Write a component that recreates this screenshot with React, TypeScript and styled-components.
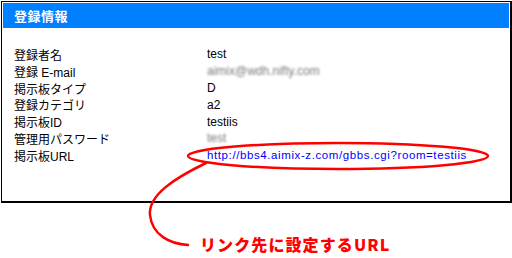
import React from "react";
import styled, { createGlobalStyle } from "styled-components";

const GlobalStyle = createGlobalStyle`
  html, body {
    margin: 0;
    padding: 0;
    background: #ffffff;
  }
  body {
    font-family: "Liberation Sans", "Noto Sans CJK JP", sans-serif;
  }
`;

const Page = styled.div`
  position: relative;
  width: 512px;
  height: 258px;
  padding: 1px 0 0 1px;
  box-sizing: border-box;
  overflow: hidden;
`;

const Panel = styled.section`
  width: 511px;
  height: 202px;
  box-sizing: border-box;
  border-style: solid;
  border-color: #000000;
  border-width: 1px 2px 2px 1px;
  padding: 1px;
  background: #ffffff;
`;

const PanelHeader = styled.h2`
  margin: 0;
  height: 25px;
  padding-left: 11px;
  display: flex;
  align-items: center;
  background: #0080ff;
  color: #ffffff;
  font-family: "Noto Sans CJK JP", sans-serif;
  font-size: 13px;
  font-weight: 700;
  letter-spacing: 0.5px;
`;

const InfoList = styled.dl`
  margin: 0;
  padding: 18px 0 0 11px;
  display: grid;
  grid-template-columns: 193px 1fr;
  grid-auto-rows: 16.8px;
  align-items: center;
  font-size: 12px;
  color: #000000;
`;

const Label = styled.dt`
  margin: 0;
  font-family: "Liberation Sans", "Noto Sans CJK JP", sans-serif;
  white-space: nowrap;
`;

const Value = styled.dd<{ $hidden?: boolean }>`
  margin: 0;
  white-space: nowrap;
  font-family: "Liberation Sans", "Noto Sans CJK JP", sans-serif;
  color: ${(p) => (p.$hidden ? "#7a7a7a" : "#000000")};
  filter: ${(p) => (p.$hidden ? "blur(1.3px)" : "none")};
`;

const Link = styled.a`
  color: #0000ff;
  text-decoration: none;
  font-size: 11.5px;
  letter-spacing: 0.6px;
`;

const Caption = styled.p`
  margin: 32px 0 0 199px;
  line-height: 19px;
  color: #ff0000;
  font-family: "Noto Sans CJK JP", sans-serif;
  font-size: 16px;
  font-weight: 900;
  letter-spacing: 1.1px;
`;

const Annotation = styled.svg`
  position: absolute;
  left: 0;
  top: 0;
  pointer-events: none;
`;

const rows: { label: string; value: string; hidden?: boolean; link?: boolean }[] = [
  { label: "登録者名", value: "test" },
  { label: "登録 E-mail", value: "aimix@wdh.nifty.com", hidden: true },
  { label: "掲示板タイプ", value: "D" },
  { label: "登録カテゴリ", value: "a2" },
  { label: "掲示板ID", value: "testiis" },
  { label: "管理用パスワード", value: "test", hidden: true },
  { label: "掲示板URL", value: "http://bbs4.aimix-z.com/gbbs.cgi?room=testiis", link: true },
];

export default function App() {
  return (
    <Page>
      <GlobalStyle />
      <Panel>
        <PanelHeader>登録情報</PanelHeader>
        <InfoList>
          {rows.map((row) => (
            <React.Fragment key={row.label}>
              <Label>{row.label}</Label>
              <Value $hidden={row.hidden}>
                {row.link ? <Link href="#">{row.value}</Link> : row.value}
              </Value>
            </React.Fragment>
          ))}
        </InfoList>
      </Panel>
      <Caption>リンク先に設定するURL</Caption>
      <Annotation width="512" height="258" viewBox="0 0 512 258">
        <ellipse cx="338" cy="156" rx="150" ry="13" fill="none" stroke="#ff0000" strokeWidth="2.5" />
        <path
          d="M206 163 C175 178 148 195 150 215 C152 235 170 244 188 245"
          fill="none"
          stroke="#ff0000"
          strokeWidth="2.5"
          strokeLinecap="round"
        />
      </Annotation>
    </Page>
  );
}
